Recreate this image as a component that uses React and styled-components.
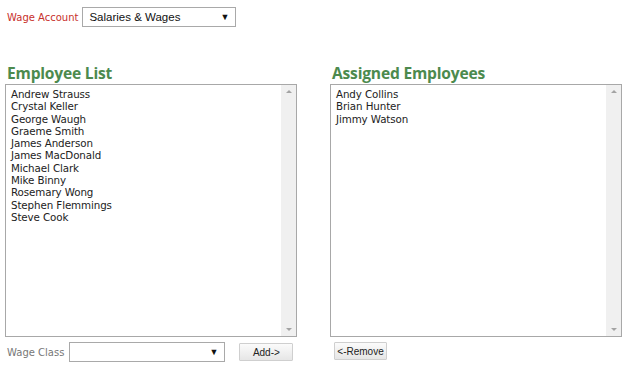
import React from "react";
import styled, { createGlobalStyle } from "styled-components";

const Global = createGlobalStyle`
  html, body { margin: 0; padding: 0; background: #fff; }
  body { font-family: "DejaVu Sans", Verdana, sans-serif; }
`;

const Page = styled.div`
  width: 629px;
  height: 367px;
  box-sizing: border-box;
  padding: 7px 0 0 5px;
  display: flex;
  flex-direction: column;
`;

const TopRow = styled.div`
  display: flex;
  align-items: center;
  gap: 4px;
  padding-left: 2px;
`;

const Label = styled.span`
  font-family: "DejaVu Sans", Verdana, sans-serif;
  font-size: 10px;
  color: ${(p) => p.$color || "#c8302b"};
`;

const FakeSelect = styled.div`
  box-sizing: border-box;
  width: ${(p) => p.$w}px;
  height: ${(p) => p.$h || 20}px;
  border: 1px solid #a9a9a9;
  background: #fff;
  display: flex;
  align-items: center;
  justify-content: space-between;
  padding: 0 6px 0 6px;
  font-family: "Liberation Sans", Arial, sans-serif;
  font-size: 11.5px;
  color: #111;
`;

const Arrow = styled.span`
  font-size: 9px;
  color: #111;
`;

const Columns = styled.div`
  display: grid;
  grid-template-columns: 292px 292px;
  column-gap: 33px;
  margin-top: 37px;
`;

const Column = styled.div`
  display: flex;
  flex-direction: column;
`;

const Heading = styled.h2`
  margin: 0 0 2px 2px;
  font-family: "Open Sans", sans-serif;
  font-weight: 700;
  font-size: 15.6px;
  line-height: 18px;
  color: #4c8a4e;
  letter-spacing: -0.2px;
`;

const ListBox = styled.div`
  box-sizing: border-box;
  height: 253px;
  border: 1px solid #a8a8a8;
  display: flex;
  background: #fff;
`;

const Items = styled.ul`
  flex: 1;
  margin: 0;
  padding: 3px 0 0 5px;
  list-style: none;
`;

const Item = styled.li`
  font-family: "DejaVu Sans", Verdana, sans-serif;
  font-size: 10.3px;
  line-height: 12.3px;
  color: #222;
  letter-spacing: -0.1px;
`;

const Scrollbar = styled.div`
  width: 15px;
  background: #f0f0f0;
  display: flex;
  flex-direction: column;
  justify-content: space-between;
  align-items: center;
  padding: 5px 0;
`;

const Tri = styled.div`
  width: 0;
  height: 0;
  border-left: 3.5px solid transparent;
  border-right: 3.5px solid transparent;
  ${(p) =>
    p.$down
      ? "border-top: 3px solid #a3a3a3;"
      : "border-bottom: 3px solid #a3a3a3;"}
`;

const Bottom = styled.div`
  display: flex;
  align-items: center;
  margin-top: 5px;
  padding-left: 2px;
  gap: 5px;
`;

const Button = styled.button`
  box-sizing: border-box;
  height: 18px;
  width: ${(p) => p.$w}px;
  margin-left: ${(p) => p.$ml || 0}px;
  padding: 0;
  border: 1px solid #cfcfcf;
  border-radius: 1px;
  background: linear-gradient(#fbfbfb, #e6e6e6);
  font-family: "Liberation Sans", Arial, sans-serif;
  font-size: 10px;
  color: #222;
`;

const left = [
  "Andrew Strauss",
  "Crystal Keller",
  "George Waugh",
  "Graeme Smith",
  "James Anderson",
  "James MacDonald",
  "Michael Clark",
  "Mike Binny",
  "Rosemary Wong",
  "Stephen Flemmings",
  "Steve Cook",
];
const right = ["Andy Collins", "Brian Hunter", "Jimmy Watson"];

function List({ items }) {
  return (
    <ListBox>
      <Items>
        {items.map((n) => (
          <Item key={n}>{n}</Item>
        ))}
      </Items>
      <Scrollbar>
        <Tri />
        <Tri $down />
      </Scrollbar>
    </ListBox>
  );
}

export default function App() {
  return (
    <>
      <Global />
      <Page>
        <TopRow>
          <Label>Wage Account</Label>
          <FakeSelect $w={154}>
            <span>Salaries &amp; Wages</span>
            <Arrow>▼</Arrow>
          </FakeSelect>
        </TopRow>
        <Columns>
          <Column>
            <Heading>Employee List</Heading>
            <List items={left} />
            <Bottom>
              <Label $color="#777">Wage Class</Label>
              <FakeSelect $w={156} $h={20}>
                <span />
                <Arrow>▼</Arrow>
              </FakeSelect>
              <Button $w={54} $ml={9}>Add-&gt;</Button>
            </Bottom>
          </Column>
          <Column>
            <Heading>Assigned Employees</Heading>
            <List items={right} />
            <Bottom>
              <Button $w={53} $ml={2}>&lt;-Remove</Button>
            </Bottom>
          </Column>
        </Columns>
      </Page>
    </>
  );
}
